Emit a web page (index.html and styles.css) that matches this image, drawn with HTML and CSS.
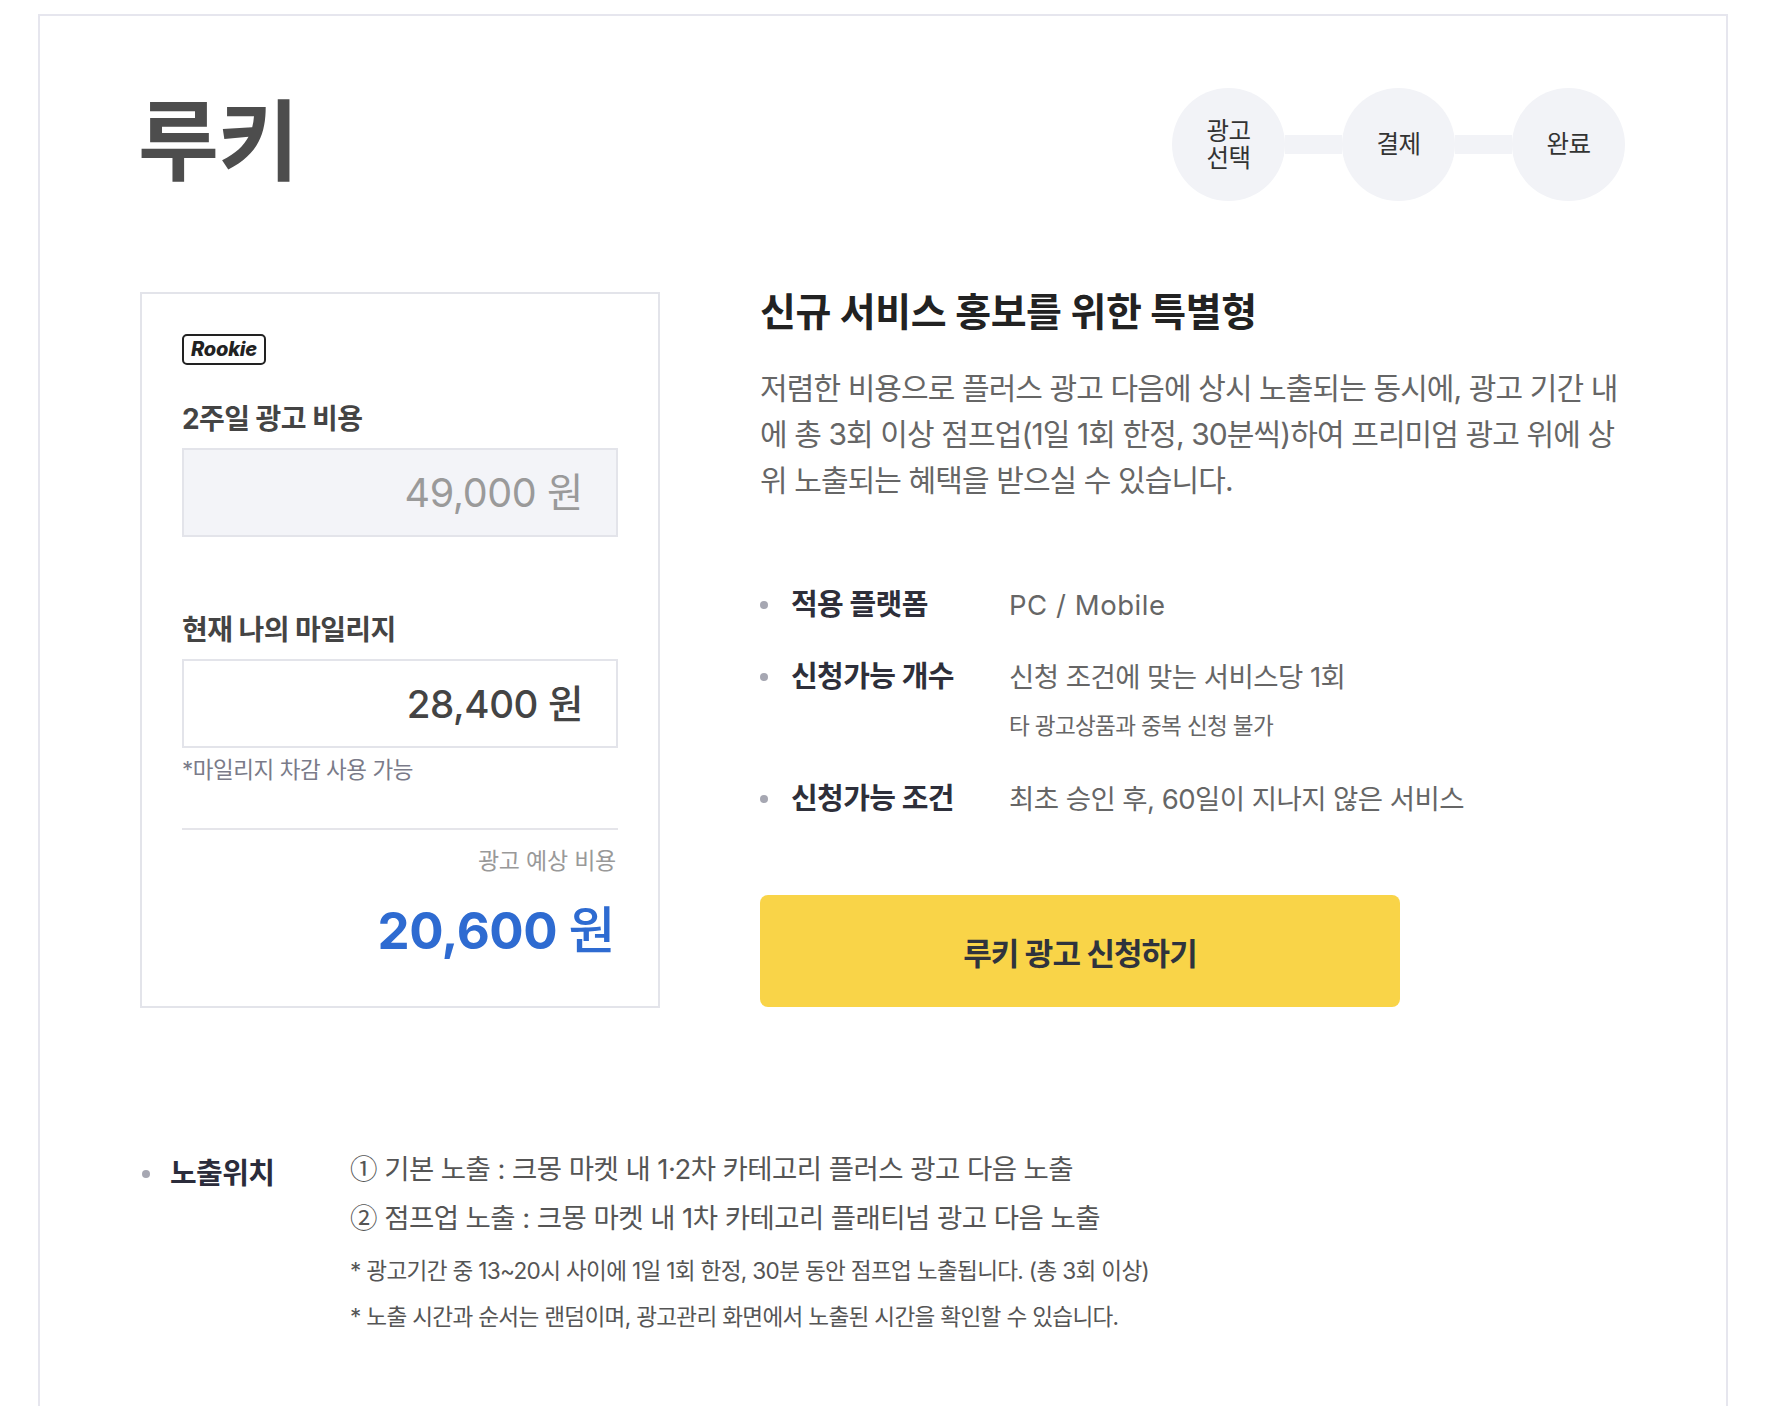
FILE: index.html
```html
<!DOCTYPE html>
<html lang="ko">
<head>
<meta charset="utf-8">
<title>루키 광고</title>
<link rel="stylesheet" href="styles.css">
</head>
<body>
<div class="page">
  <header class="top">
    <h1 class="title">루키</h1>
    <ol class="steps">
      <li class="step">광고<br>선택</li>
      <li class="step-line" aria-hidden="true"></li>
      <li class="step">결제</li>
      <li class="step-line" aria-hidden="true"></li>
      <li class="step">완료</li>
    </ol>
  </header>

  <section class="main">
    <div class="card">
      <span class="badge">Rookie</span>
      <div class="field-label first">2주일 광고 비용</div>
      <div class="field gray">49,000 원</div>
      <div class="field-label second">현재 나의 마일리지</div>
      <div class="field mine">28,400 원</div>
      <p class="note">*마일리지 차감 사용 가능</p>
      <hr class="divider">
      <div class="est-label">광고 예상 비용</div>
      <div class="est-value">20,600 <span class="won">원</span></div>
    </div>

    <div class="info">
      <h2 class="headline">신규 서비스 홍보를 위한 특별형</h2>
      <p class="desc">저렴한 비용으로 플러스 광고 다음에 상시 노출되는 동시에, 광고 기간 내에 총 3회 이상 점프업(1일 1회 한정, 30분씩)하여 프리미엄 광고 위에 상위 노출되는 혜택을 받으실 수 있습니다.</p>
      <ul class="specs">
        <li class="spec">
          <span class="dot"></span>
          <span class="spec-label">적용 플랫폼</span>
          <div class="spec-value latin">PC / Mobile</div>
        </li>
        <li class="spec">
          <span class="dot"></span>
          <span class="spec-label">신청가능 개수</span>
          <div class="spec-value">
            <div>신청 조건에 맞는 서비스당 1회</div>
            <div class="spec-sub">타 광고상품과 중복 신청 불가</div>
          </div>
        </li>
        <li class="spec">
          <span class="dot"></span>
          <span class="spec-label">신청가능 조건</span>
          <div class="spec-value">최초 승인 후, 60일이 지나지 않은 서비스</div>
        </li>
      </ul>
      <button class="apply" type="button">루키 광고 신청하기</button>
    </div>
  </section>

  <section class="exposure">
    <span class="dot big"></span>
    <span class="exp-label">노출위치</span>
    <div class="exp-body">
      <div class="exp-line"><span class="num">①</span> 기본 노출 : 크몽 마켓 내 1·2차 카테고리 플러스 광고 다음 노출</div>
      <div class="exp-line"><span class="num">②</span> 점프업 노출 : 크몽 마켓 내 1차 카테고리 플래티넘 광고 다음 노출</div>
      <div class="exp-note first">* 광고기간 중 13~20시 사이에 1일 1회 한정, 30분 동안 점프업 노출됩니다. (총 3회 이상)</div>
      <div class="exp-note">* 노출 시간과 순서는 랜덤이며, 광고관리 화면에서 노출된 시간을 확인할 수 있습니다.</div>
    </div>
  </section>
</div>
</body>
</html>
```

FILE: styles.css
```css
* { box-sizing: border-box; }

html, body {
  margin: 0;
  padding: 0;
  background: #ffffff;
}

body {
  font-family: "Inter", "Noto Sans CJK KR", sans-serif;
  color: #333;
}

.page {
  margin: 14px 0 0 38px;
  width: 1690px;
  border: 2px solid #e6e6ee;
  border-bottom: none;
  padding: 72px 101px 120px 100px;
}

/* header */
.top {
  display: flex;
  justify-content: space-between;
  align-items: flex-start;
}

.title {
  margin: 9px 0 0 -2px;
  font-size: 88px;
  line-height: 88px;
  font-weight: 700;
  color: #4d4d4d;
  letter-spacing: -0.01em;
}

.steps {
  display: flex;
  align-items: center;
  list-style: none;
  margin: 0;
  padding: 0;
}

.step {
  width: 113px;
  height: 113px;
  border-radius: 50%;
  background: #f2f3f7;
  display: flex;
  align-items: center;
  justify-content: center;
  text-align: center;
  font-size: 24.5px;
  line-height: 27px;
  color: #333;
  letter-spacing: -0.02em;
}

.step-line {
  width: 57px;
  height: 19px;
  background: #f2f3f7;
}

/* main */
.main {
  display: flex;
  gap: 100px;
  margin-top: 91px;
  align-items: flex-start;
}

.card {
  width: 520px;
  flex: none;
  border: 2px solid #e3e4ea;
  padding: 40px 40px 45px;
  display: flex;
  flex-direction: column;
}

.badge {
  align-self: flex-start;
  height: 31px;
  padding: 0 7px;
  border: 2px solid #222;
  border-radius: 5px;
  font-family: "Inter", sans-serif;
  font-style: italic;
  font-weight: 800;
  font-size: 20px;
  line-height: 27px;
  color: #222;
  letter-spacing: -0.01em;
}

.field-label {
  font-size: 28px;
  line-height: 36px;
  font-weight: 700;
  color: #444;
  letter-spacing: -0.02em;
}
.field-label.first { margin-top: 36px; }
.field-label.second { margin-top: 75px; }

.field {
  margin-top: 11px;
  height: 89px;
  border: 2px solid #e3e4ea;
  display: flex;
  align-items: center;
  justify-content: flex-end;
  padding-right: 33px;
  font-size: 39.5px;
  line-height: 46px;
  color: #444;
  letter-spacing: -0.01em;
}
.field.gray {
  background: #f3f4f8;
  color: #9a9a9a;
}
.field.mine {
  font-weight: 500;
  font-size: 38.5px;
}

.note {
  margin: 6px 0 0;
  font-size: 22.5px;
  line-height: 32px;
  color: #7a7b89;
  letter-spacing: -0.02em;
}

.divider {
  margin: 42px 0 0;
  border: none;
  height: 2px;
  background: #e5e5ea;
}

.est-label {
  margin-top: 15px;
  text-align: right;
  font-size: 23px;
  line-height: 32px;
  color: #999;
  letter-spacing: -0.01em;
  padding-right: 2px;
}

.est-value {
  margin-top: 24px;
  text-align: right;
  font-size: 51px;
  line-height: 60px;
  font-weight: 700;
  color: #2e6bd1;
  letter-spacing: -0.01em;
  padding-right: 3px;
}
.est-value .won {
  font-weight: 500;
}

/* info column */
.info {
  flex: 1;
  min-width: 0;
}

.headline {
  margin: -4px 0 0;
  font-size: 39px;
  line-height: 48px;
  font-weight: 700;
  color: #222;
  letter-spacing: -0.01em;
}

.desc {
  margin: 29px 0 0;
  width: 876px;
  font-size: 30px;
  line-height: 46px;
  color: #666;
  letter-spacing: -0.03em;
}

.specs {
  list-style: none;
  margin: 82px 0 0;
  padding: 0;
}

.spec {
  display: flex;
  align-items: flex-start;
}
.spec + .spec { margin-top: 32px; }

.dot {
  flex: none;
  width: 8px;
  height: 8px;
  border-radius: 50%;
  background: #a6a7b2;
  margin-top: 16px;
  margin-right: 23px;
}

.spec-label {
  flex: none;
  width: 218px;
  font-size: 29px;
  line-height: 40px;
  font-weight: 700;
  color: #2e2f3a;
  letter-spacing: -0.02em;
}

.spec-value {
  font-size: 27.5px;
  line-height: 40px;
  color: #666;
  letter-spacing: -0.02em;
}
.spec-value.latin {
  letter-spacing: 0.02em;
}

.spec-sub {
  margin-top: 14px;
  margin-bottom: 6px;
  font-size: 22.6px;
  line-height: 30px;
  color: #666;
  letter-spacing: -0.03em;
}

.apply {
  display: block;
  margin-top: 76px;
  width: 640px;
  height: 112px;
  border: none;
  border-radius: 8px;
  background: #f9d448;
  font-family: "Inter", "Noto Sans CJK KR", sans-serif;
  font-size: 31px;
  font-weight: 700;
  color: #2f333d;
  letter-spacing: -0.03em;
  cursor: pointer;
}

/* exposure */
.exposure {
  display: flex;
  align-items: flex-start;
  margin-top: 136px;
}

.dot.big {
  margin-top: 26px;
  margin-left: 2px;
  margin-right: 20px;
}

.exp-label {
  flex: none;
  width: 180px;
  margin-top: 7px;
  font-size: 29px;
  line-height: 46px;
  font-weight: 700;
  color: #2b2c3b;
  letter-spacing: -0.02em;
}

.exp-line {
  font-size: 27.5px;
  line-height: 47px;
  color: #555;
  letter-spacing: -0.02em;
}

.num {
  font-family: "Noto Sans CJK KR", sans-serif;
}

.exp-note {
  font-size: 22.6px;
  line-height: 46px;
  color: #555;
  letter-spacing: -0.03em;
}
.exp-note.first { margin-top: 6px; }
```
